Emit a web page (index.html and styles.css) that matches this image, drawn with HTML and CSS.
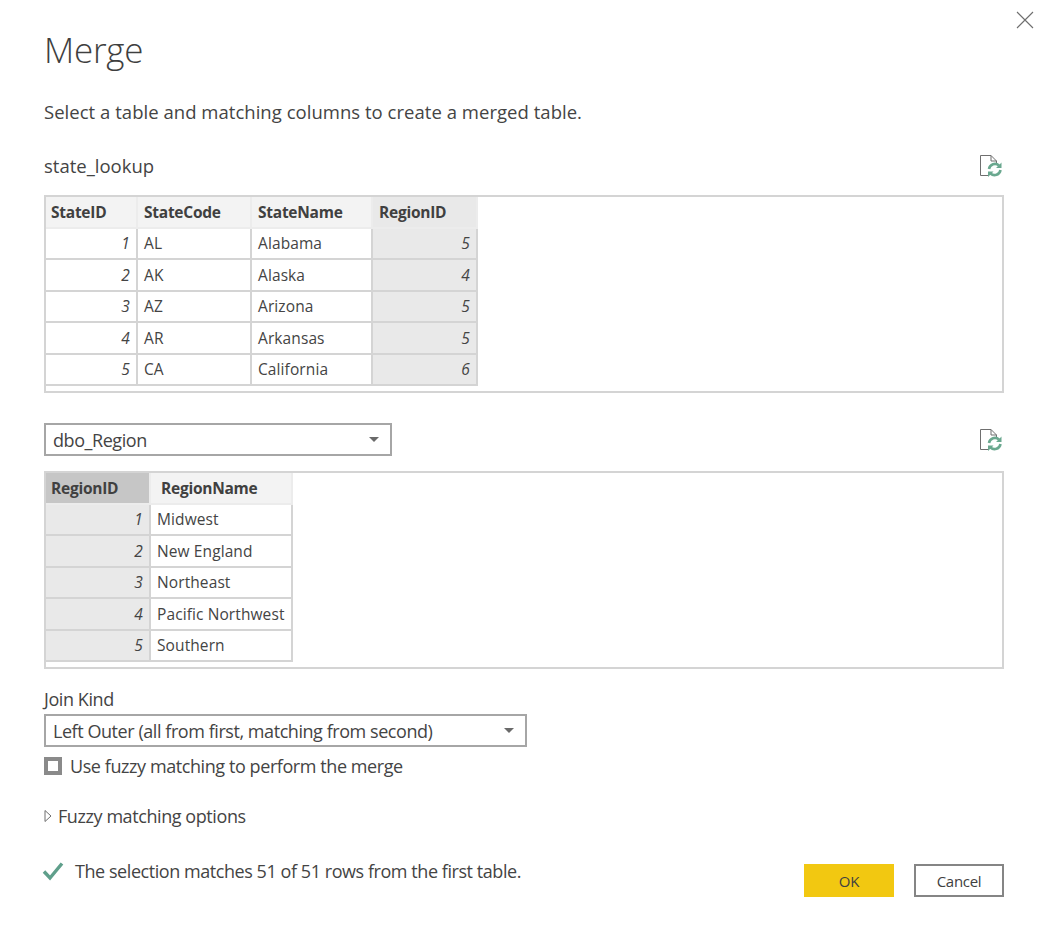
FILE: index.html
```html
<!DOCTYPE html>
<html lang="en">
<head>
<meta charset="utf-8">
<title>Merge</title>
<link rel="stylesheet" href="styles.css">
</head>
<body>
<main class="dialog">
  <svg class="close" width="18" height="18" viewBox="0 0 18 18"><path d="M1 1 17 17M17 1 1 17" stroke="#6e6e6e" stroke-width="1.1" fill="none"/></svg>
  <h1 class="title">Merge</h1>
  <p class="subtitle">Select a table and matching columns to create a merged table.</p>

  <div class="row-head first-head">
    <span class="heading">state_lookup</span>
    <svg class="refresh" width="24" height="24" viewBox="0 0 24 24"><path d="M10 21.5H1.5V1.5H12L17.5 7V9M12 1.5V7H17.5" fill="none" stroke="#6f6f6f" stroke-width="1"/><path d="M10 15A6 6 0 0 1 20 11.5M21.5 16A6 6 0 0 1 11.5 19.5" fill="none" stroke="#6aa88f" stroke-width="2.6"/><path d="M22.5 8.5V14H17ZM9 23V17.5H14.5Z" fill="#6aa88f"/></svg>
  </div>
  <div class="preview">
    <table class="grid grid-a">
      <colgroup><col class="a1"><col class="a2"><col class="a3"><col class="a4"></colgroup>
      <thead><tr><th>StateID</th><th>StateCode</th><th>StateName</th><th class="sel">RegionID</th></tr></thead>
      <tbody>
        <tr><td class="num">1</td><td>AL</td><td>Alabama</td><td class="num sel">5</td></tr>
        <tr><td class="num">2</td><td>AK</td><td>Alaska</td><td class="num sel">4</td></tr>
        <tr><td class="num">3</td><td>AZ</td><td>Arizona</td><td class="num sel">5</td></tr>
        <tr><td class="num">4</td><td>AR</td><td>Arkansas</td><td class="num sel">5</td></tr>
        <tr><td class="num">5</td><td>CA</td><td>California</td><td class="num sel">6</td></tr>
      </tbody>
    </table>
  </div>

  <div class="row-head second-head">
    <div class="select select-table"><span>dbo_Region</span><i class="caret"></i></div>
    <svg class="refresh" width="24" height="24" viewBox="0 0 24 24"><path d="M10 21.5H1.5V1.5H12L17.5 7V9M12 1.5V7H17.5" fill="none" stroke="#6f6f6f" stroke-width="1"/><path d="M10 15A6 6 0 0 1 20 11.5M21.5 16A6 6 0 0 1 11.5 19.5" fill="none" stroke="#6aa88f" stroke-width="2.6"/><path d="M22.5 8.5V14H17ZM9 23V17.5H14.5Z" fill="#6aa88f"/></svg>
  </div>
  <div class="preview">
    <table class="grid grid-b">
      <colgroup><col class="b1"><col class="b2"></colgroup>
      <thead><tr><th class="key">RegionID</th><th class="wide">RegionName</th></tr></thead>
      <tbody>
        <tr><td class="num sel">1</td><td>Midwest</td></tr>
        <tr><td class="num sel">2</td><td>New England</td></tr>
        <tr><td class="num sel">3</td><td>Northeast</td></tr>
        <tr><td class="num sel">4</td><td>Pacific Northwest</td></tr>
        <tr><td class="num sel">5</td><td>Southern</td></tr>
      </tbody>
    </table>
  </div>

  <div class="label join-label">Join Kind</div>
  <div class="select select-join"><span>Left Outer (all from first, matching from second)</span><i class="caret"></i></div>
  <div class="check-row"><i class="checkbox"></i><span class="label">Use fuzzy matching to perform the merge</span></div>
  <div class="options-row">
    <svg class="tri" width="8" height="14" viewBox="0 0 8 14"><path d="M1 1.5 7 7 1 12.5Z" fill="none" stroke="#6f6f6f"/></svg>
    <span class="label">Fuzzy matching options</span>
  </div>
  <div class="footer">
    <div class="status">
      <svg width="22" height="20" viewBox="0 0 22 20"><path d="M2 10.5 8 17 20 2.5" fill="none" stroke="#5f9f8b" stroke-width="3.4"/></svg>
      <span class="label status-text">The selection matches 51 of 51 rows from the first table.</span>
    </div>
    <div class="buttons">
      <button class="btn ok">OK</button>
      <button class="btn cancel">Cancel</button>
    </div>
  </div>
</main>
</body>
</html>
```
FILE: styles.css
```css
* { box-sizing: border-box; }
html, body { margin: 0; background: #fff; }
body { font-family: "Open Sans", "Noto Sans", sans-serif; color: #444; }
.dialog { position: relative; width: 1049px; height: 941px; padding: 0 45px 0 44px; }
.close { position: absolute; left: 1016px; top: 11px; }
.title { margin: 0; padding-top: 27px; font-size: 35px; line-height: 46px; font-weight: 300; color: #3f3f3f; letter-spacing: -0.25px; }
.subtitle { margin: 26px 0 0; font-size: 18.5px; line-height: 26px; letter-spacing: 0.03px; }
.heading { font-size: 18.5px; line-height: 26px; }
.label { font-size: 18px; line-height: 26px; letter-spacing: -0.42px; }
.status-text { letter-spacing: -0.44px; }
.row-head { display: flex; justify-content: space-between; align-items: center; }
.first-head { margin-top: 27px; height: 28px; margin-bottom: 15px; }
.second-head { margin-top: 30px; height: 33px; margin-bottom: 15px; }
.refresh { margin-right: 1px; display: block; }
.preview { height: 198px; border: 2px solid #d4d4d4; }
.grid { border-collapse: separate; border-spacing: 0; table-layout: fixed; font-size: 15.5px; border-left: 1px solid #d4d4d4; margin-left: -1px; }
.grid-a { width: 433px; }
.grid-b { width: 248px; }
.a1 { width: 92px; } .a2 { width: 114px; } .a3 { width: 121px; } .a4 { width: 105px; }
.b1 { width: 105px; } .b2 { width: 142px; }
.grid th, .grid td { height: 31.5px; padding: 0 6px; text-align: left; border-right: 2px solid #d4d4d4; border-bottom: 2px solid #d4d4d4; letter-spacing: 0.1px; white-space: nowrap; overflow: hidden; }
.grid th { background: #f3f3f3; font-weight: 700; color: #404040; letter-spacing: -0.25px; border-right-color: #ececec; border-bottom-color: #ececec; }
.grid th:first-child { padding-left: 5px; }
.grid td { color: #444; }
.grid td.num { text-align: right; font-style: italic; }
.grid .sel { background: #e9e9e9; }
.grid th.key { background: #c6c6c6; }
.grid th.wide { padding-left: 10px; }
.select { display: flex; align-items: center; justify-content: space-between; height: 33px; border: 2px solid #a6a6a6; padding: 0 11px 0 7px; font-size: 18px; letter-spacing: -0.44px; }
.select-table { width: 348px; }
.select-join { width: 483px; }
.caret { width: 0; height: 0; border-left: 5px solid transparent; border-right: 5px solid transparent; border-top: 5px solid #6a6a6a; }
.join-label { margin-top: 17px; height: 28px; }
.check-row { display: flex; align-items: center; gap: 8px; margin-top: 7px; height: 24px; }
.checkbox { display: block; width: 18px; height: 18px; border: 4px solid #8a8a8a; background: #fff; }
.options-row { display: flex; align-items: center; gap: 6px; margin-top: 25px; height: 26px; }
.tri { display: block; }
.footer { display: flex; justify-content: space-between; align-items: flex-start; margin-top: 29px; }
.status { display: flex; align-items: center; gap: 11px; margin-left: -2px; height: 26px; }
.buttons { display: flex; gap: 20px; margin-top: 6px; }
.btn { width: 90px; height: 33px; font: 15px "Open Sans", "Noto Sans", sans-serif; letter-spacing: -0.3px; color: #404040; background: #fff; padding: 0; border-radius: 0; }
.ok { background: #f2c811; border: 0; }
.cancel { border: 2px solid #858585; }
```
